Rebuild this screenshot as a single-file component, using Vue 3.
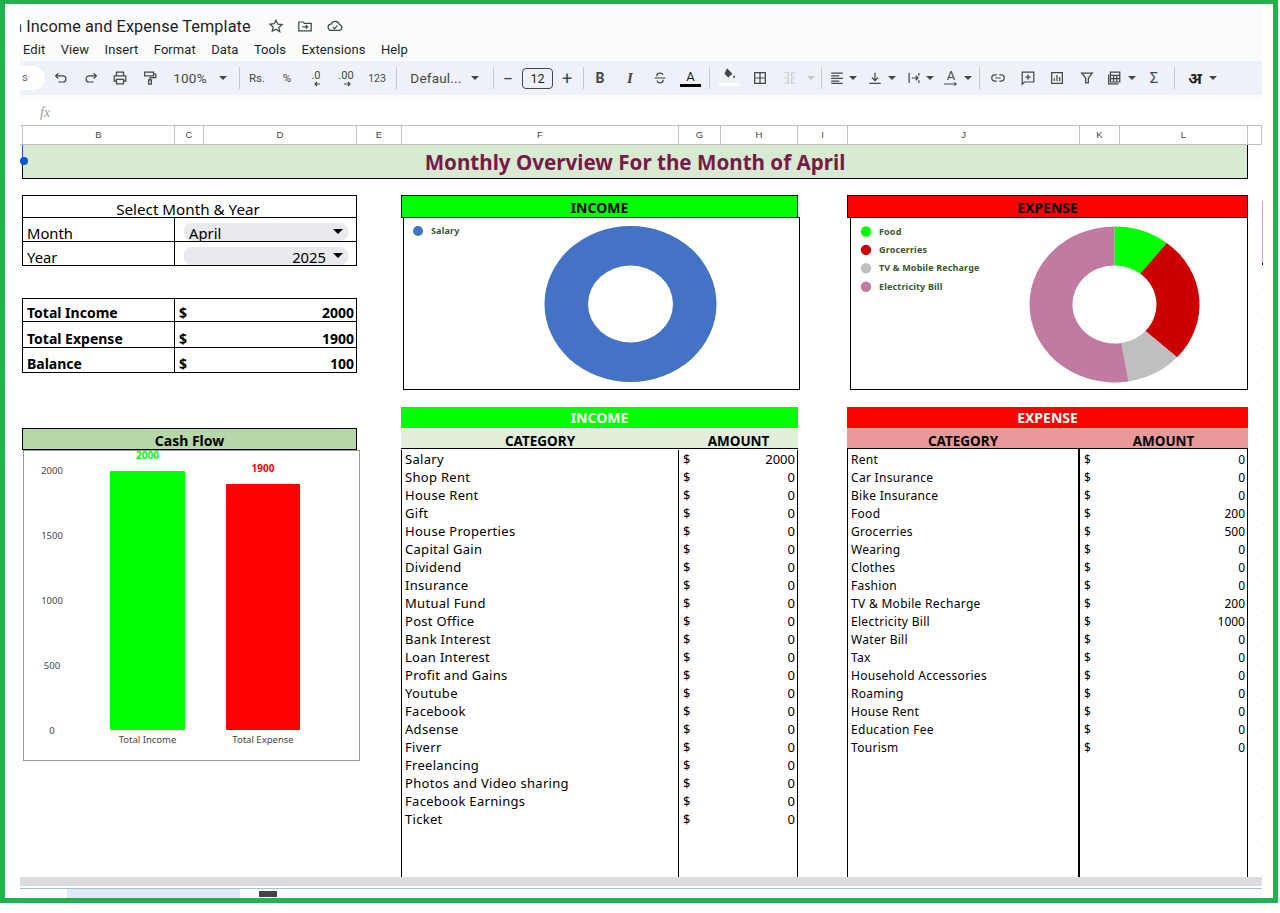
<template>
  <div class="frame">
    <div class="app">
      <header class="chrome">
        <div class="doc-title">
          <span class="doc-name">n Income and Expense Template</span>
          <svg class="doc-icon" viewBox="0 0 18 18"><path d="M9 2.5l2 4.4 4.8.5-3.6 3.2 1 4.7L9 12.5l-4.2 2.3 1-4.7-3.6-3.2 4.8-.5z" /></svg>
          <svg class="doc-icon" viewBox="0 0 18 18"><path d="M2 4.5h5l1.5 1.5H16v8.5H2zM6 10h6M10 8l2 2-2 2" /></svg>
          <svg class="doc-icon" viewBox="0 0 18 18"><path d="M5 14a3.5 3.5 0 0 1-.5-7A5 5 0 0 1 14 7.5a3.3 3.3 0 0 1 0 6.5zM6.5 10.5l2 1.5 3-3.5" /></svg>
        </div>
        <nav class="menu">
          <span v-for="m in menus" :key="m">{{ m }}</span>
        </nav>
        <div class="toolbar">
          <div class="search-pill">s</div>
          <div
            v-for="item in toolItems"
            :key="item.id"
            class="tool"
            :class="item.type"
            :style="{ marginLeft: item.gap + 'px', width: item.w + 'px' }"
          >
            <svg v-if="item.path" viewBox="0 0 18 18" class="tool-icon" :class="{ off: item.off }"><path :d="item.path" /></svg>
            <template v-else-if="item.text">{{ item.text }}</template>
            <template v-else-if="item.type === 'dec'">
              <span class="dec-text">{{ item.label }}</span>
              <svg viewBox="0 0 10 6" class="dec-arrow"><path :d="item.arrow" /></svg>
            </template>
            <template v-else-if="item.type === 'color'">
              <span class="color-a">A</span>
              <i class="color-bar"></i>
            </template>
            <template v-else-if="item.type === 'fill'">
              <svg viewBox="0 0 18 18" class="fill-icon"><path d="M6 1.5l6.5 6.5-5 4.5L3 8zM14.5 10c.8 1 1.2 1.6 1.2 2.1a1.2 1.2 0 0 1-2.4 0c0-.5.4-1.1 1.2-2.1z" /></svg>
              <i class="fill-bar"></i>
            </template>
            <template v-else-if="item.type === 'rotate'">
              <span class="rotate-a">A</span>
              <svg viewBox="0 0 16 5" class="rotate-arrow"><path d="M1 2h12M11 .5 13.5 2 11 3.5" /></svg>
            </template>
          </div>
        </div>
      </header>

      <div class="formula-bar"><span class="fx">fx</span></div>

      <div class="col-head">
        <span
          v-for="c in columns"
          :key="c.name"
          :style="{ width: c.w + 'px' }"
        >{{ c.name }}</span>
      </div>

      <main class="sheet">
        <i class="handle-line"></i>
        <i class="handle"></i>
        <h1 class="page-title">Monthly Overview For the Month of April</h1>

        <div class="board">
          <section class="left">
            <table class="box select-box">
              <colgroup><col class="first-col" /><col /></colgroup>
              <tbody>
                <tr class="r-title"><td colspan="2" class="center">Select Month &amp; Year</td></tr>
                <tr>
                  <td>Month</td>
                  <td class="chip-cell"><div class="chip"><span>April</span><i class="chip-caret"></i></div></td>
                </tr>
                <tr>
                  <td>Year</td>
                  <td class="chip-cell"><div class="chip end"><span>2025</span><i class="chip-caret"></i></div></td>
                </tr>
              </tbody>
            </table>

            <table class="box totals">
              <colgroup><col class="first-col" /><col /></colgroup>
              <tbody>
                <tr v-for="t in totals" :key="t.label" :class="t.cls">
                  <td>{{ t.label }}</td>
                  <td><div class="money"><span>$</span><span>{{ t.value }}</span></div></td>
                </tr>
              </tbody>
            </table>

            <div class="cash-head">Cash Flow</div>
            <div class="cash-chart">
              <svg viewBox="24 451 335 309" width="335" height="309">
                <text v-for="t in ticks" :key="t.label" class="tick" x="52" :y="t.y" text-anchor="middle">{{ t.label }}</text>
                <g v-for="b in bars" :key="b.name">
                  <rect :x="b.x" :y="b.top" :width="b.w" :height="730 - b.top" :fill="b.color" rx="1" />
                  <text class="bar-value" :x="b.x + b.w / 2" :y="b.top - 12" :fill="b.color" text-anchor="middle">{{ b.value }}</text>
                  <text class="bar-name" :x="b.x + b.w / 2" y="743" text-anchor="middle">{{ b.name }}</text>
                </g>
              </svg>
            </div>
          </section>

          <section class="mid">
            <div class="band income-band">INCOME</div>
            <div class="donut-box income-donut">
              <svg viewBox="404 218 395 171" width="395" height="171">
                <circle cx="418" cy="231" r="5" fill="#4472c4" />
                <text class="legend" x="431" y="234">Salary</text>
                <path :d="incomeRing" fill="#4472c4" fill-rule="evenodd" />
              </svg>
            </div>

            <div class="ledger-title income-title">INCOME</div>
            <div class="ledger-head income-sub">
              <span class="lh-cat inc-cat">CATEGORY</span>
              <span class="lh-amt inc-amt">AMOUNT</span>
            </div>
            <div class="ledger income-ledger">
              <div class="lg-cat inc-cat">
                <div v-for="r in incomeRows" :key="r.name" class="lg-row">{{ r.name }}</div>
              </div>
              <div class="lg-amt inc-amt">
                <div v-for="r in incomeRows" :key="r.name" class="lg-row money"><span>$</span><span>{{ r.value }}</span></div>
              </div>
            </div>
          </section>

          <section class="right">
            <div class="band expense-band">EXPENSE</div>
            <div class="donut-box expense-donut">
              <svg viewBox="851 218 396 171" width="396" height="171">
                <g v-for="(s, i) in expenseSlices" :key="s.name">
                  <circle cx="866" :cy="231.5 + i * 18.4" r="5.2" :fill="s.color" />
                  <text class="legend" x="879" :y="234.5 + i * 18.4">{{ s.name }}</text>
                  <path :d="s.path" :fill="s.color" />
                </g>
              </svg>
            </div>

            <div class="ledger-title expense-title">EXPENSE</div>
            <div class="ledger-head expense-sub">
              <span class="lh-cat exp-cat">CATEGORY</span>
              <span class="lh-amt exp-amt">AMOUNT</span>
            </div>
            <div class="ledger expense-ledger">
              <div class="lg-cat exp-cat">
                <div v-for="r in expenseRows" :key="r.name" class="lg-row">{{ r.name }}</div>
              </div>
              <div class="lg-amt exp-amt">
                <div v-for="r in expenseRows" :key="r.name" class="lg-row money"><span>$</span><span>{{ r.value }}</span></div>
              </div>
            </div>
          </section>
        </div>
      </main>

      <div class="scrollbar"></div>
      <footer class="tabs">
        <i class="tab-active"></i>
        <i class="tab-dark"></i>
      </footer>

      <i class="side-mark"></i>
      <i class="side-dots"></i>
    </div>
  </div>
</template>

<script setup>
import { computed } from 'vue'

const menus = ['Edit', 'View', 'Insert', 'Format', 'Data', 'Tools', 'Extensions', 'Help']

// toolbar items, c = centre x on the page
const rawTools = [
  { c: 61, path: 'M6 3.5 3 6.5l3 3M3 6.5h8a3.5 3.5 0 0 1 0 7H6' },
  { c: 91, path: 'M12 3.5l3 3-3 3M15 6.5H7a3.5 3.5 0 0 0 0 7h5' },
  { c: 120, path: 'M5 6V2.5h8V6M5 12.5H2.5v-6h13v6H13M5 10.5h8v5H5z' },
  { c: 150, path: 'M3 2.5h10v4H3zM13 4.5h2.5v4H9V11M7.5 11h3v5h-3z' },
  { c: 190, w: 36, text: '100%', type: 'label wide' },
  { c: 223, w: 8, type: 'caret' },
  { c: 239, w: 1, type: 'sep' },
  { c: 257, w: 20, text: 'Rs.', type: 'label small' },
  { c: 287, w: 14, text: '%', type: 'label small' },
  { c: 316, w: 18, type: 'dec', label: '.0', arrow: 'M9 3H4M6 1 4 3l2 2' },
  { c: 346, w: 22, type: 'dec', label: '.00', arrow: 'M3 3h6M7 1l2 2-2 2' },
  { c: 377, w: 20, text: '123', type: 'label tiny' },
  { c: 396, w: 1, type: 'sep' },
  { c: 436, w: 52, text: 'Defaul...', type: 'label wide' },
  { c: 475, w: 8, type: 'caret' },
  { c: 493, w: 1, type: 'sep' },
  { c: 508, w: 12, text: '−', type: 'label big' },
  { c: 537.5, w: 31, text: '12', type: 'label size' },
  { c: 567, w: 14, text: '+', type: 'label big' },
  { c: 583, w: 1, type: 'sep' },
  { c: 600, w: 14, text: 'B', type: 'label bold' },
  { c: 630, w: 14, text: 'I', type: 'label ital' },
  { c: 660, path: 'M3 9h12M12.5 5.5C12 4 10.6 3.5 9 3.5S5.5 4.3 5.5 6c0 .5.2.9.5 1.2M5.5 12c.5 1.7 2 2.5 3.5 2.5s3.5-.8 3.5-2.7c0-.3-.1-.6-.2-.8' },
  { c: 690.5, w: 21, type: 'color' },
  { c: 709.5, w: 1, type: 'sep' },
  { c: 729, w: 21, type: 'fill' },
  { c: 760, path: 'M3 3h12v12H3zM9 3v12M3 9h12' },
  { c: 790, off: true, path: 'M3 3h4v4M3 15h4v-4M15 3h-4v4M15 15h-4v-4M3 9h4M11 9h4M7 3v12M11 3v12' },
  { c: 811, w: 8, type: 'caret off' },
  { c: 821, w: 1, type: 'sep' },
  { c: 837, path: 'M2.5 3.5h13M2.5 6.5h9M2.5 9.5h13M2.5 12.5h9M2.5 15h13' },
  { c: 853, w: 8, type: 'caret' },
  { c: 875, path: 'M9 3v9M5.5 8.5 9 12l3.5-3.5M2.5 15h13' },
  { c: 892, w: 8, type: 'caret' },
  { c: 914, path: 'M3.5 3.5v11M14.5 3.5v3M14.5 11.5v3M6.5 9h7M11 6.5 13.5 9 11 11.5' },
  { c: 930, w: 8, type: 'caret' },
  { c: 951, w: 16, type: 'rotate' },
  { c: 968, w: 8, type: 'caret' },
  { c: 979, w: 1, type: 'sep' },
  { c: 998, path: 'M7.5 5.5h-2a3.5 3.5 0 0 0 0 7h2M10.5 5.5h2a3.5 3.5 0 0 1 0 7h-2M6 9h6' },
  { c: 1028, path: 'M2.5 2.5h13v11H5l-2.5 2.5zM9 5v6M6 8h6' },
  { c: 1057, path: 'M3 3h12v12H3zM6 12.5V9.5M9 12.5V5.5M12 12.5V8' },
  { c: 1087, path: 'M3 3.5h12L10.5 9v5.5h-3V9z' },
  { c: 1114, path: 'M3 5v10.5h11M5 2.5h10.5v11H5zM5 6h10.5M8.5 6v7.5M12 6v7.5M5 9.7h10.5' },
  { c: 1132, w: 8, type: 'caret' },
  { c: 1154, w: 14, text: 'Σ', type: 'label sigma' },
  { c: 1174, w: 1, type: 'sep' },
  { c: 1195, w: 18, text: 'अ', type: 'label hindi' },
  { c: 1213, w: 8, type: 'caret' }
]

// turn centres into flow margins after the search pill
const toolItems = computed(() => {
  let end = 45
  return rawTools.map((t, i) => {
    const w = t.w || 18
    const gap = t.c - w / 2 - end
    end = t.c + w / 2
    return { ...t, id: i, w, gap, type: t.type || 'icon' }
  })
})

const columns = [
  { name: '', w: 3 },
  { name: 'B', w: 152 },
  { name: 'C', w: 29 },
  { name: 'D', w: 153 },
  { name: 'E', w: 45 },
  { name: 'F', w: 277 },
  { name: 'G', w: 42 },
  { name: 'H', w: 77 },
  { name: 'I', w: 50 },
  { name: 'J', w: 232 },
  { name: 'K', w: 40 },
  { name: 'L', w: 128 },
  { name: ' ', w: 14 }
]

const totals = [
  { label: 'Total Income', value: 2000, cls: 'r-a' },
  { label: 'Total Expense', value: 1900, cls: 'r-b' },
  { label: 'Balance', value: 100, cls: 'r-c' }
]

const ticks = [0, 500, 1000, 1500, 2000].map((v) => ({
  label: v,
  y: 733.5 - (v / 2000) * 259.5
}))

const barTop = (v) => 730 - (v / 2000) * 259
const bars = [
  { name: 'Total Income', value: 2000, x: 110, w: 75, color: '#00ff00', top: barTop(2000) },
  { name: 'Total Expense', value: 1900, x: 226, w: 74, color: '#ff0000', top: barTop(1900) }
]

const incomeRows = [
  ['Salary', 2000], ['Shop Rent', 0], ['House Rent', 0], ['Gift', 0], ['House Properties', 0],
  ['Capital Gain', 0], ['Dividend', 0], ['Insurance', 0], ['Mutual Fund', 0], ['Post Office', 0],
  ['Bank Interest', 0], ['Loan Interest', 0], ['Profit and Gains', 0], ['Youtube', 0], ['Facebook', 0],
  ['Adsense', 0], ['Fiverr', 0], ['Freelancing', 0], ['Photos and Video sharing', 0],
  ['Facebook Earnings', 0], ['Ticket', 0]
].map(([name, value]) => ({ name, value }))

const expenseRows = [
  ['Rent', 0], ['Car Insurance', 0], ['Bike Insurance', 0], ['Food', 200], ['Grocerries', 500],
  ['Wearing', 0], ['Clothes', 0], ['Fashion', 0], ['TV & Mobile Recharge', 200], ['Electricity Bill', 1000],
  ['Water Bill', 0], ['Tax', 0], ['Household Accessories', 0], ['Roaming', 0], ['House Rent', 0],
  ['Education Fee', 0], ['Tourism', 0]
].map(([name, value]) => ({ name, value }))

// the donuts are stretched, so they are ellipses and not circles
const pt = (cx, cy, rx, ry, a) => {
  const r = (a * Math.PI) / 180
  return `${(cx + rx * Math.sin(r)).toFixed(2)} ${(cy - ry * Math.cos(r)).toFixed(2)}`
}

const slice = (d, from, to) => {
  const large = to - from > 180 ? 1 : 0
  return `M${pt(d.cx, d.cy, d.rx, d.ry, from)}A${d.rx} ${d.ry} 0 ${large} 1 ${pt(d.cx, d.cy, d.rx, d.ry, to)}` +
    `L${pt(d.cx, d.cy, d.ix, d.iy, to)}A${d.ix} ${d.iy} 0 ${large} 0 ${pt(d.cx, d.cy, d.ix, d.iy, from)}Z`
}

const ellipse = (cx, cy, rx, ry) =>
  `M${cx - rx} ${cy}A${rx} ${ry} 0 1 0 ${cx + rx} ${cy}A${rx} ${ry} 0 1 0 ${cx - rx} ${cy}Z`

const incomeRing = ellipse(630.5, 304, 86, 78) + ellipse(630.5, 304, 42.5, 38.5)

const expenseDonut = { cx: 1114.5, cy: 304.5, rx: 85, ry: 78, ix: 42, iy: 39 }
const expenseParts = [
  { name: 'Food', value: 200, color: '#00ff00' },
  { name: 'Grocerries', value: 500, color: '#cc0000' },
  { name: 'TV & Mobile Recharge', value: 200, color: '#bfbfbf' },
  { name: 'Electricity Bill', value: 1000, color: '#c27ba0' }
]
const expenseSlices = computed(() => {
  const total = expenseParts.reduce((sum, p) => sum + p.value, 0)
  let angle = 0
  return expenseParts.map((p) => {
    const from = angle
    angle += (p.value / total) * 360
    return { ...p, path: slice(expenseDonut, from, angle) }
  })
})
</script>

<style scoped>
.frame {
  width: 1278px;
  height: 903px;
  box-sizing: border-box;
  border: 5px solid #22b14c;
  border-top-width: 4px;
  padding: 0 11px 0 15px;
  background: #fff;
  overflow: hidden;
}

.app {
  position: relative;
  width: 1242px;
  height: 895px;
  display: flex;
  flex-direction: column;
  font-family: Roboto, "Liberation Sans", sans-serif;
  color: #000;
}

.chrome {
  height: 97px;
  background: #f9fbfd;
  overflow: hidden;
}

.doc-title {
  height: 34px;
  padding-top: 10px;
  box-sizing: border-box;
  display: flex;
  align-items: center;
  margin-left: -7px;
  color: #1f1f1f;
}

.doc-name {
  font-size: 16.3px;
  letter-spacing: 0.1px;
  white-space: nowrap;
  margin-right: 17px;
}

.doc-icon {
  width: 16px;
  height: 16px;
  margin-right: 13.5px;
  fill: none;
  stroke: #444746;
  stroke-width: 1.4;
}

.menu {
  height: 23px;
  display: flex;
  align-items: center;
  gap: 15.5px;
  padding-left: 3px;
  font-size: 13px;
  letter-spacing: 0.06px;
  color: #1f1f1f;
}

.toolbar {
  height: 34px;
  background: #eef2f8;
  display: flex;
  align-items: center;
}

.search-pill {
  width: 25px;
  height: 24px;
  background: #fff;
  border-radius: 0 12px 12px 0;
  font-size: 11px;
  color: #666;
  line-height: 24px;
  padding-left: 2px;
  box-sizing: border-box;
  flex: none;
}

.tool {
  flex: none;
  display: flex;
  align-items: center;
  justify-content: center;
  height: 24px;
  color: #444746;
  position: relative;
}

.tool-icon {
  width: 16px;
  height: 16px;
  fill: none;
  stroke: #444746;
  stroke-width: 1.4;
}

.tool-icon.off {
  stroke: #c4c7c5;
  stroke-dasharray: 2 1;
}

.label {
  font-size: 13px;
  white-space: nowrap;
}

.wide {
  font-size: 13.5px;
  letter-spacing: 0.2px;
}

.small {
  font-size: 11.5px;
}

.tiny {
  font-size: 10.5px;
}

.big {
  font-size: 18px;
}

.bold {
  font-size: 14px;
  font-weight: 700;
}

.ital {
  font-family: "Liberation Serif", serif;
  font-size: 15px;
  font-style: italic;
  font-weight: 700;
}

.size {
  height: 21px;
  border: 1px solid #444746;
  border-radius: 4px;
  box-sizing: border-box;
  font-size: 12.5px;
  color: #1f1f1f;
}

.sigma {
  font-size: 15px;
}

.hindi {
  font-size: 16px;
  font-weight: 700;
  color: #1f1f1f;
  font-family: "Noto Sans", "DejaVu Sans", sans-serif;
}

.caret {
  width: 8px;
  height: 0;
  box-sizing: border-box;
  border-left: 4px solid transparent;
  border-right: 4px solid transparent;
  border-top: 4px solid #444746;
}

.caret.off {
  border-top-color: #c4c7c5;
}

.sep {
  height: 22px;
  background: #c7c7c7;
}

.dec {
  flex-direction: column;
  font-size: 11px;
  line-height: 11px;
}

.dec-arrow {
  width: 10px;
  height: 6px;
  fill: none;
  stroke: #444746;
  stroke-width: 1.2;
}

.color {
  flex-direction: column;
}

.color-a {
  font-size: 13px;
  line-height: 15px;
  color: #1f1f1f;
}

.color-bar {
  width: 21px;
  height: 3px;
  background: #000;
}

.fill {
  flex-direction: column;
}

.fill-icon {
  width: 15px;
  height: 15px;
  margin-top: -3px;
  fill: #444746;
}

.fill-bar {
  width: 21px;
  height: 3px;
  background: #fff;
  margin-top: 1px;
}

.rotate {
  flex-direction: column;
  line-height: 12px;
}

.rotate-a {
  font-size: 13px;
}

.rotate-arrow {
  width: 16px;
  height: 5px;
  fill: none;
  stroke: #444746;
  stroke-width: 1;
}

.formula-bar {
  height: 24px;
  background: #fff;
  display: flex;
  align-items: center;
  padding-left: 20px;
}

.fx {
  font-family: "Liberation Serif", serif;
  font-style: italic;
  font-size: 14px;
  color: #9aa0a6;
}

.col-head {
  height: 20px;
  box-sizing: border-box;
  display: flex;
  background: #fff;
  border-top: 1px solid #c0c0c0;
  border-bottom: 1px solid #c0c0c0;
  overflow: hidden;
}

.col-head span {
  flex: none;
  box-sizing: border-box;
  border-right: 1px solid #c0c0c0;
  text-align: center;
  font-size: 9.5px;
  line-height: 18px;
  color: #444746;
  font-family: "Liberation Sans", sans-serif;
}

.sheet {
  position: relative;
  height: 732px;
  flex: none;
  padding-left: 2px;
  background: #fff;
  overflow: hidden;
  font-family: "Noto Sans", sans-serif;
}

.handle-line {
  position: absolute;
  left: 2px;
  top: 0;
  width: 1px;
  height: 16px;
  background: #0b57d0;
}

.handle {
  position: absolute;
  left: 0;
  top: 12px;
  width: 8px;
  height: 8px;
  border-radius: 50%;
  background: #0b57d0;
}

.page-title {
  margin: 0;
  width: 1226px;
  height: 34px;
  box-sizing: border-box;
  background: #d9ead3;
  border: 1px solid #000;
  border-top: 0;
  color: #741b47;
  font-size: 20.6px;
  font-weight: 700;
  line-height: 35px;
  text-align: center;
}

.board {
  display: flex;
  align-items: stretch;
  height: 698px;
  padding-top: 16px;
  box-sizing: border-box;
}

.left {
  width: 335px;
  flex: none;
}

.mid {
  width: 397px;
  flex: none;
  margin-left: 44px;
  display: flex;
  flex-direction: column;
}

.right {
  width: 401px;
  flex: none;
  margin-left: 49px;
  display: flex;
  flex-direction: column;
}

.box {
  width: 335px;
  border-collapse: collapse;
  table-layout: fixed;
  font-size: 14.8px;
}

.first-col {
  width: 152px;
}

.box td {
  box-sizing: border-box;
  border: 1px solid #000;
  padding: 0 2px 0 4px;
  vertical-align: bottom;
  line-height: 17px;
  overflow: hidden;
  white-space: nowrap;
}

.select-box tr {
  height: 24px;
}

.select-box td {
  line-height: 15px;
}

.select-box .r-title {
  height: 22px;
}

.box .center {
  text-align: center;
  font-size: 15.2px;
  padding: 0 3px 0 0;
}

.box .chip-cell {
  padding: 5px 8px 0 9px;
}

.chip {
  height: 18px;
  background: #e8eaed;
  border-radius: 8px;
  display: flex;
  align-items: flex-end;
  justify-content: space-between;
  padding: 0 5px;
}

.chip.end {
  justify-content: flex-end;
  gap: 7px;
}

.chip-caret {
  width: 0;
  height: 0;
  margin: 0 0 7px;
  border-left: 5px solid transparent;
  border-right: 5px solid transparent;
  border-top: 5px solid #000;
}

.totals {
  margin-top: 32px;
  font-size: 14px;
  font-weight: 700;
}

.totals .r-a {
  height: 23px;
}

.totals .r-b {
  height: 26px;
}

.totals .r-c {
  height: 25px;
}

.money {
  display: flex;
  justify-content: space-between;
}

.cash-head {
  margin-top: 55px;
  height: 22px;
  box-sizing: border-box;
  border: 1px solid #000;
  background: #b6d7a8;
  font-size: 14px;
  font-weight: 700;
  line-height: 23px;
  text-align: center;
}

.cash-chart {
  width: 337px;
  height: 311px;
  margin-left: 1px;
  box-sizing: border-box;
  border: 1px solid #999;
  background: #fff;
}

.cash-chart svg,
.donut-box svg {
  display: block;
  overflow: visible;
}

.tick {
  font-size: 9.5px;
  fill: #444;
}

.bar-value {
  font-size: 10px;
  font-weight: 700;
}

.bar-name {
  font-size: 9.5px;
  fill: #444;
}

.band {
  height: 23px;
  box-sizing: border-box;
  border: 1px solid #000;
  font-size: 14px;
  font-weight: 700;
  line-height: 24px;
  text-align: center;
}

.income-band {
  background: #00ff00;
}

.expense-band {
  background: #ff0000;
}

.donut-box {
  height: 173px;
  box-sizing: border-box;
  border: 1px solid #000;
  margin-top: -1px;
  background: #fff;
  position: relative;
}

.income-donut {
  width: 397px;
  margin-left: 2px;
}

.expense-donut {
  width: 398px;
  margin-left: 3px;
}

.legend {
  font-size: 9px;
  font-weight: 700;
  letter-spacing: 0.15px;
  fill: #38572a;
}

.ledger-title {
  margin-top: 17px;
  height: 21px;
  color: #fff;
  font-size: 14px;
  font-weight: 700;
  line-height: 22px;
  text-align: center;
  flex: none;
}

.income-title {
  background: #00ff00;
}

.expense-title {
  background: #ff0000;
}

.ledger-head {
  height: 21px;
  display: flex;
  flex: none;
  font-size: 13.5px;
  font-weight: 700;
  line-height: 26px;
  text-align: center;
  border-bottom: 1px solid #000;
  box-sizing: border-box;
  overflow: hidden;
}

.income-sub {
  background: #e2efda;
}

.expense-sub {
  background: #ea9999;
}

.inc-cat {
  width: 278px;
}

.inc-amt {
  width: 119px;
}

.exp-cat {
  width: 232px;
}

.exp-amt {
  width: 169px;
}

.ledger {
  display: flex;
  flex: 1;
  min-height: 0;
  box-sizing: border-box;
}

.income-ledger {
  padding-top: 1px;
  font-size: 13px;
}

.lg-cat {
  box-sizing: border-box;
  border-left: 1px solid #000;
  border-right: 1px solid #000;
  padding-left: 3px;
  letter-spacing: 0.3px;
}

.lg-amt {
  box-sizing: border-box;
  border-right: 1px solid #000;
  padding: 0 2px 0 4px;
}

.expense-ledger {
  font-size: 12px;
}

.expense-ledger .lg-cat {
  border-right-width: 2px;
  width: 233px;
  padding-top: 2px;
}

.expense-ledger .lg-amt {
  width: 168px;
  padding-top: 2px;
}

.lg-row {
  height: 18px;
  line-height: 18px;
  white-space: nowrap;
}

.scrollbar {
  height: 9px;
  background: #dadce0;
}

.tabs {
  position: relative;
  height: 11px;
  margin-top: 2px;
  border-top: 1px solid #a9c0c8;
  background: #f7fbfd;
  box-sizing: border-box;
}

.tab-active {
  position: absolute;
  left: 47px;
  top: 0;
  width: 173px;
  height: 10px;
  background: #dfe8f5;
}

.tab-dark {
  position: absolute;
  left: 239px;
  top: 2px;
  width: 18px;
  height: 6px;
  background: #444;
}

.side-mark {
  position: absolute;
  right: -1px;
  top: 197px;
  width: 1px;
  height: 62px;
  background: #c9a0d0;
  border-bottom: 2px solid #000;
}

.side-dots {
  position: absolute;
  right: -1px;
  top: 285px;
  width: 1px;
  height: 588px;
  background: repeating-linear-gradient(#d8d8d8 0 1px, transparent 1px 29.3px);
}
</style>
